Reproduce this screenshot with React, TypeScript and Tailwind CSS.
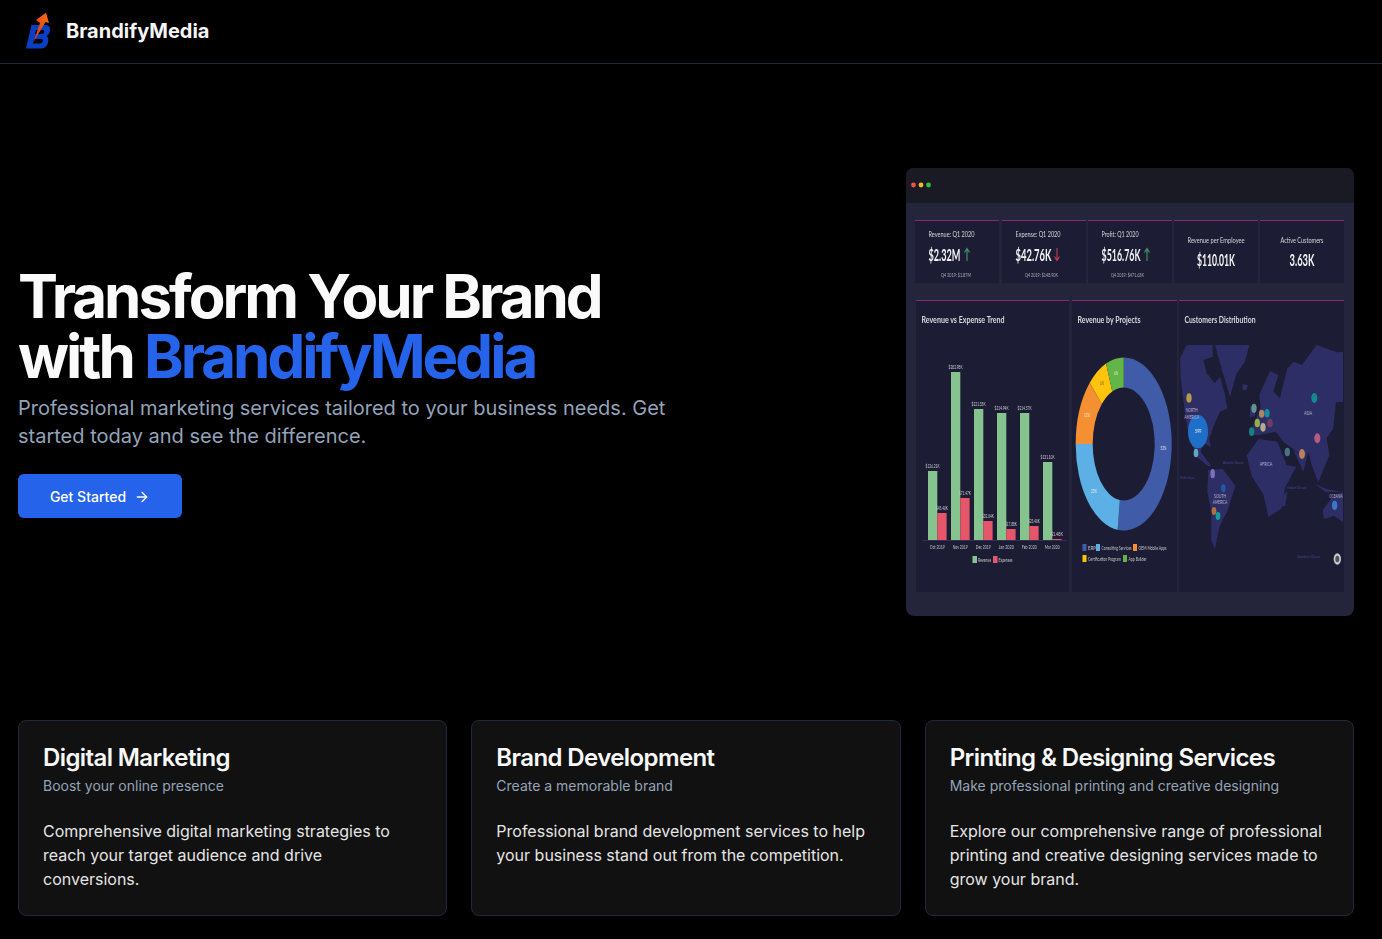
import type { ReactNode } from 'react';
import { ArrowRight } from 'lucide-react';

const services = [
  {
    title: 'Digital Marketing',
    subtitle: 'Boost your online presence',
    body: 'Comprehensive digital marketing strategies to reach your target audience and drive conversions.',
  },
  {
    title: 'Brand Development',
    subtitle: 'Create a memorable brand',
    body: 'Professional brand development services to help your business stand out from the competition.',
  },
  {
    title: 'Printing & Designing Services',
    subtitle: 'Make professional printing and creative designing',
    body: 'Explore our comprehensive range of professional printing and creative designing services made to grow your brand.',
  },
];

const kpis = [
  { x: 9, label: 'Revenue: Q1 2020', lw: 46, value: '$2.32M', vw: 32, foot: 'Q4 2019: $1.87M', fw: 30, fx: 35, arrow: 'up', ax: 61 },
  { x: 96, label: 'Expense: Q1 2020', lw: 45, value: '$42.76K', vw: 36, foot: 'Q4 2019: $148.90K', fw: 33, fx: 119, arrow: 'down', ax: 151 },
  { x: 182, label: 'Profit: Q1 2020', lw: 37, value: '$516.76K', vw: 39, foot: 'Q4 2019: $471.63K', fw: 33, fx: 205, arrow: 'up', ax: 241 },
  { x: 268, label: 'Revenue per Employee', lw: 57, value: '$110.01K', vw: 38 },
  { x: 354, label: 'Active Customers', lw: 43, value: '3.63K', vw: 25 },
];

// bar tops measured off the reference
const bars = [
  { x: 22, g: 303, r: 345, gl: '$126.21K', rl: '$45.40K', m: 'Oct 2019' },
  { x: 45, g: 204, r: 330, gl: '$282.98K', rl: '$71.47K', m: 'Nov 2019' },
  { x: 68, g: 241, r: 353, gl: '$221.35K', rl: '$32.04K', m: 'Dec 2019' },
  { x: 91, g: 245, r: 361, gl: '$214.94K', rl: '$17.88K', m: 'Jan 2020' },
  { x: 114, g: 245, r: 358, gl: '$214.57K', rl: '$23.40K', m: 'Feb 2020' },
  { x: 137, g: 294, r: 371, gl: '$131.10K', rl: '$1.48K', m: 'Mar 2020' },
];

const donut = [
  { from: 0, to: 52, c: '#3f5ca8' },
  { from: 52, to: 75, c: '#5cb0e6' },
  { from: 75, to: 87.5, c: '#f48f33' },
  { from: 87.5, to: 94, c: '#fdc30a' },
  { from: 94, to: 100, c: '#63b546' },
];

const legend = [
  { x: 176.5, y: 376, w: 8, c: '#3f5ca8', t: 'ERP' },
  { x: 190, y: 376, w: 30, c: '#5cb0e6', t: 'Consulting Services' },
  { x: 227, y: 376, w: 28, c: '#f48f33', t: 'OEM Mobile Apps' },
  { x: 176.5, y: 387, w: 33, c: '#fdc30a', t: 'Certification Program' },
  { x: 217, y: 387, w: 18, c: '#63b546', t: 'App Builder' },
];

function pt(p: number, rx: number, ry: number) {
  const a = (p / 100) * Math.PI * 2;
  return `${217.7 + rx * Math.sin(a)} ${276 - ry * Math.cos(a)}`;
}

function wedge(from: number, to: number) {
  const big = to - from > 50 ? 1 : 0;
  return `M${pt(from, 48, 86.5)} A48 86.5 0 ${big} 1 ${pt(to, 48, 86.5)} L${pt(to, 31, 56.5)} A31 56.5 0 ${big} 0 ${pt(from, 31, 56.5)} Z`;
}

const pins = [
  { x: 57, y: 309, rx: 8, ry: 14, c: '#b89a4c' },
  { x: 78, y: 474, rx: 7, ry: 13, c: '#5fa8c4' },
  { x: 128, y: 536, rx: 7, ry: 14, c: '#7d70b4' },
  { x: 160, y: 580, rx: 7, ry: 12, c: '#1f5aa8' },
  { x: 132, y: 648, rx: 7, ry: 12, c: '#b0703f' },
  { x: 144, y: 663, rx: 7, ry: 12, c: '#14a09a' },
  { x: 252, y: 340, rx: 8, ry: 14, c: '#5f9494' },
  { x: 275, y: 356, rx: 8, ry: 12, c: '#b08660' },
  { x: 291, y: 355, rx: 8, ry: 13, c: '#1a8aa2' },
  { x: 300, y: 384, rx: 8, ry: 13, c: '#6f3d5e' },
  { x: 262, y: 384, rx: 8, ry: 13, c: '#94ae48' },
  { x: 279, y: 397, rx: 8, ry: 13, c: '#b4aa90' },
  { x: 245, y: 410, rx: 8, ry: 13, c: '#14807f' },
  { x: 352, y: 471, rx: 8, ry: 13, c: '#477386' },
  { x: 396, y: 477, rx: 9, ry: 15, c: '#b9805c' },
  { x: 442, y: 430, rx: 9, ry: 15, c: '#b45b81' },
  { x: 433, y: 309, rx: 9, ry: 15, c: '#12898c' },
  { x: 494, y: 631, rx: 8, ry: 14, c: '#3978c2' },
];

// squeezed text: the source screenshot of the dashboard is narrowed, so widths are forced
function T({ x, y, w, size, fill, anchor, bold, children }: { x: number; y: number; w: number; size: number; fill: string; anchor?: 'middle'; bold?: boolean; children: ReactNode }) {
  return (
    <text x={x} y={y} fontSize={size} fill={fill} fontWeight={bold ? 700 : 400} textAnchor={anchor} textLength={w} lengthAdjust="spacingAndGlyphs">
      {children}
    </text>
  );
}

function DashboardPreview() {
  return (
    <svg viewBox="0 0 448 448" className="w-[448px] h-[448px] rounded-lg shrink-0 block" style={{ fontFamily: 'Lato, sans-serif' }}>
      <defs>
        <filter id="soft" x="-5%" y="-5%" width="110%" height="110%">
          <feGaussianBlur stdDeviation="0.4" />
        </filter>
        <filter id="softer" x="-5%" y="-5%" width="110%" height="110%">
          <feGaussianBlur stdDeviation="2" />
        </filter>
        <clipPath id="mapclip">
          <rect x="274" y="176" width="163" height="226" />
        </clipPath>
      </defs>
      <rect width="448" height="448" fill="#24243a" />
      <rect width="448" height="35" fill="#1a1a24" />
      <g filter="url(#soft)">
        <circle cx="7.5" cy="17" r="2.4" fill="#f0524f" />
        <circle cx="15" cy="17" r="2.4" fill="#f5b42a" />
        <circle cx="22.5" cy="17" r="2.4" fill="#2fc145" />

        {kpis.map((k) => (
          <g key={k.label}>
            <rect x={k.x} y={52} width={84} height={63} fill="#1f1f35" />
            <rect x={k.x} y={52} width={84} height={1} fill="#8a2a6e" />
            {k.foot ? (
              <>
                <T x={k.x + 13.5} y={69} w={k.lw} size={8} fill="#d5d5da">{k.label}</T>
                <T x={k.x + 13.5} y={93} w={k.vw} size={17} fill="#f2f2f5" bold>{k.value}</T>
                <T x={k.fx} y={109} w={k.fw} size={5} fill="#a9a9b3">{k.foot}</T>
                {k.arrow === 'up' ? (
                  <path d={`M${k.ax} 93 V81 M${k.ax - 2.5} 84.5 L${k.ax} 80.5 L${k.ax + 2.5} 84.5`} stroke="#3f9a5f" strokeWidth="1.1" fill="none" />
                ) : (
                  <path d={`M${k.ax} 80 V92 M${k.ax - 2.5} 88.5 L${k.ax} 92.5 L${k.ax + 2.5} 88.5`} stroke="#c23a4f" strokeWidth="1.1" fill="none" />
                )}
              </>
            ) : (
              <>
                <T x={k.x + 42} y={74.5} w={k.lw} size={8} fill="#d5d5da" anchor="middle">{k.label}</T>
                <T x={k.x + 42} y={97.5} w={k.vw} size={17} fill="#f2f2f5" anchor="middle" bold>{k.value}</T>
              </>
            )}
          </g>
        ))}

        {[
          { x: 10, w: 153, t: 'Revenue vs Expense Trend', tw: 83 },
          { x: 166, w: 105, t: 'Revenue by Projects', tw: 63 },
          { x: 273, w: 165, t: 'Customers Distribution', tw: 71 },
        ].map((p) => (
          <g key={p.t}>
            <rect x={p.x} y={132} width={p.w} height={292} fill="#1f1f35" />
            <rect x={p.x} y={132} width={p.w} height={1} fill="#8a2a6e" />
            <T x={p.x + 5.5} y={155} w={p.tw} size={10} fill="#d8d8dd" bold>{p.t}</T>
          </g>
        ))}

        {bars.map((b) => (
          <g key={b.m}>
            <rect x={b.x} y={b.g} width={9.3} height={372 - b.g} fill="#86c48f" />
            <rect x={b.x + 9.3} y={b.r} width={9.3} height={372 - b.r} fill="#e5566b" />
            <T x={b.x + 4.6} y={b.g - 3} w={14} size={5} fill="#c8c8d0" anchor="middle">{b.gl}</T>
            <T x={b.x + 13.9} y={b.r - 3} w={12} size={5} fill="#c8c8d0" anchor="middle">{b.rl}</T>
            <T x={b.x + 9.3} y={381} w={15} size={5.5} fill="#c0c0c8" anchor="middle">{b.m}</T>
          </g>
        ))}
        <rect x="16" y="372" width="145" height="0.6" fill="#3d3a6a" />
        <rect x="66.5" y="388" width="4.5" height="7" fill="#86c48f" />
        <T x={72} y={393.5} w={13} size={5} fill="#c0c0c8">Revenue</T>
        <rect x="87" y="388" width="4.5" height="7" fill="#e5566b" />
        <T x={92.5} y={393.5} w={14} size={5} fill="#c0c0c8">Expenses</T>

        {donut.map((d) => (
          <path key={d.c} d={wedge(d.from, d.to)} fill={d.c} />
        ))}
        <T x={257.5} y={282} w={6} size={5} fill="#e8e8ee" anchor="middle">52%</T>
        <T x={188} y={325} w={6} size={5} fill="#e8e8ee" anchor="middle">23%</T>
        <T x={181} y={249} w={6} size={5} fill="#f5e8d8" anchor="middle">12%</T>
        <T x={196} y={217} w={4} size={5} fill="#7a6510" anchor="middle">6%</T>
        <T x={210} y={207} w={4} size={5} fill="#dff0d8" anchor="middle">6%</T>

        {legend.map((l) => (
          <g key={l.t}>
            <rect x={l.x} y={l.y} width={4} height={7} fill={l.c} />
            <T x={l.x + 5.5} y={l.y + 5.5} w={l.w} size={5} fill="#c0c0c8">{l.t}</T>
          </g>
        ))}
      </g>

      <g clipPath="url(#mapclip)">
        <g transform="translate(264 127) scale(0.3333)">
          <g fill="#2f2d66" filter="url(#softer)">
            {/* north america */}
            <path d="M30 190 L50 150 L128 150 L128 185 L100 195 L110 235 L135 265 L150 245 L165 300 L172 340 L150 350 L130 395 L118 430 L122 455 L100 445 L92 470 L125 515 L112 512 L80 485 L58 430 L46 360 L38 300 L32 250 Z" />
            {/* greenland */}
            <path d="M135 150 L238 150 L225 200 L200 235 L180 305 L165 255 L150 205 Z" />
            {/* iceland */}
            <path d="M218 268 L233 270 L230 285 L217 284 Z" />
            {/* uk */}
            <path d="M240 335 L252 330 L256 362 L240 368 Z" />
            {/* europe + asia */}
            <path d="M248 395 L262 362 L272 335 L268 300 L300 228 L325 240 L310 290 L330 310 L352 220 L372 200 L395 210 L440 150 L500 172 L520 170 L520 320 L498 322 L490 400 L470 430 L478 480 L462 520 L445 562 L425 510 L415 470 L400 530 L370 465 L395 480 L340 440 L318 410 L280 418 L262 420 L244 420 Z" />
            {/* africa */}
            <path d="M230 482 L265 432 L322 440 L350 510 L378 516 L345 578 L335 640 L296 666 L280 598 L246 545 Z" />
            {/* madagascar */}
            <path d="M342 598 L352 590 L346 632 L335 634 Z" />
            {/* south america */}
            <path d="M115 525 L158 522 L196 572 L172 648 L148 695 L135 762 L124 735 L124 650 L112 590 Z" />
            {/* australia */}
            <path d="M458 645 L490 602 L520 590 L520 682 L492 662 L462 672 Z" />
            {/* indonesia */}
            <path d="M432 565 L468 582 L515 590 L468 592 Z" />
          </g>
          <g>
            <ellipse cx="84" cy="410" rx="30" ry="50" fill="#1f6fc8" />
            {pins.map((p) => (
              <ellipse key={`${p.x}-${p.y}`} cx={p.x} cy={p.y} rx={p.rx} ry={p.ry} fill={p.c} />
            ))}
            <ellipse cx="502" cy="792" rx="11" ry="17" fill="#c9c9c9" />
            <ellipse cx="502" cy="792" rx="6" ry="10" fill="#55535f" />
            <T x={84} y={415} w={20} size={15} fill="#e8eefa" anchor="middle">599</T>
            <T x={65} y={350} w={36} size={15} fill="#b9b8cc" anchor="middle">NORTH</T>
            <T x={65} y={372} w={44} size={15} fill="#b9b8cc" anchor="middle">AMERICA</T>
            <T x={414} y={360} w={24} size={15} fill="#b9b8cc" anchor="middle">ASIA</T>
            <T x={288} y={513} w={38} size={15} fill="#b9b8cc" anchor="middle">AFRICA</T>
            <T x={150} y={608} w={36} size={15} fill="#b9b8cc" anchor="middle">SOUTH</T>
            <T x={150} y={628} w={44} size={15} fill="#b9b8cc" anchor="middle">AMERICA</T>
            <T x={498} y={609} w={40} size={15} fill="#b9b8cc" anchor="middle">OCEANIA</T>
            <T x={190} y={508} w={62} size={13} fill="#4c4890" anchor="middle">Atlantic Ocean</T>
            <T x={380} y={582} w={56} size={13} fill="#4c4890" anchor="middle">Indian Ocean</T>
            <T x={416} y={790} w={68} size={13} fill="#4c4890" anchor="middle">Southern Ocean</T>
            <T x={52} y={553} w={42} size={13} fill="#4c4890" anchor="middle">Pacific Ocean</T>
          </g>
        </g>
      </g>
    </svg>
  );
}

function Logo() {
  return (
    <svg viewBox="0 0 36 44" className="w-9 h-11 shrink-0 mb-[3px]">
      <defs>
        <linearGradient id="logoArrow" x1="0" y1="1" x2="1" y2="0">
          <stop offset="0" stopColor="#e02a12" />
          <stop offset="1" stopColor="#f97316" />
        </linearGradient>
      </defs>
      <path d="M11.5 17 H25 Q31 17 30 22.5 Q29.5 26.5 26.5 28 Q29 29.5 28 34.5 Q27 40.5 20 40.5 H6 Z M16 22 L15 26 H21 Q24 26 24.3 24 Q24.5 22 22 22 Z M14 31 L13 35.5 H19.5 Q22.5 35.5 23 33.3 Q23.3 31 20.5 31 Z" fill="#0a3fc4" fillRule="evenodd" />
      <path d="M26 4.7 L29 15 L25.5 14 L13.5 34 L20 15 L16 12 Z" fill="url(#logoArrow)" />
    </svg>
  );
}

export default function App() {
  return (
    <div className="min-h-screen bg-black text-white" style={{ fontFamily: 'Inter, sans-serif' }}>
      <header className="h-16 border-b border-[#1e293b] pl-5 flex items-center gap-2.5">
        <Logo />
        <span className="text-xl font-bold text-[#f5f5f5] mb-[2px]">BrandifyMedia</span>
      </header>

      <main className="pl-[18px] pr-[28px]">
        <section className="py-[104px] flex items-center justify-between">
          <div className="max-w-2xl">
            <h1 className="text-6xl font-bold tracking-tighter leading-none text-[#fafafa]">
              Transform Your Brand
              <br />
              with <span className="text-[#2563eb]">BrandifyMedia</span>
            </h1>
            <p className="mt-2 text-xl leading-7 text-[#94a3b8]">
              Professional marketing services tailored to your business needs. Get started today and see the difference.
            </p>
            <button className="mt-6 h-11 w-[164px] rounded-md bg-[#2563eb] text-sm font-medium flex items-center justify-center gap-2 pt-px">
              Get Started
              <ArrowRight className="w-4 h-4" />
            </button>
          </div>
          <DashboardPreview />
        </section>

        <section className="grid grid-cols-3 gap-6 pb-[23px]">
          {services.map((s) => (
            <div key={s.title} className="rounded-lg border border-[#1e293b] bg-[#111111] p-6 pt-[25px] h-[196px]">
              <h3 className="text-2xl font-semibold leading-none tracking-tight text-[#f8f8f8]">{s.title}</h3>
              <p className="mt-[6px] text-sm text-[#94a3b8]">{s.subtitle}</p>
              <p className="mt-[23px] text-base text-[#e5e5e5]">{s.body}</p>
            </div>
          ))}
        </section>
      </main>
    </div>
  );
}
